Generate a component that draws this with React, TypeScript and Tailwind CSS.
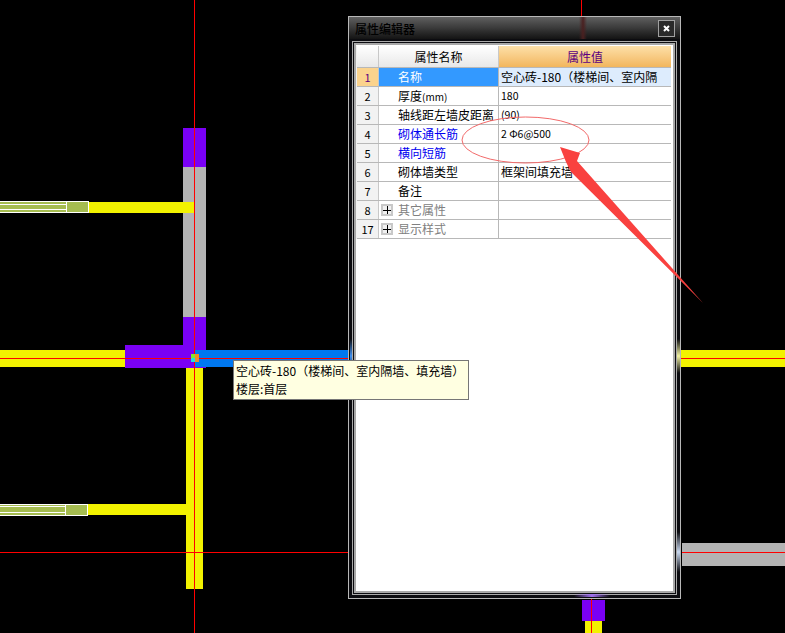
const CJK = 'font-["Noto_Sans_CJK_SC","Liberation_Sans",sans-serif]';

type Row = {
  no: string;
  name: string;
  unit?: string;
  value?: string;
  tone?: 'blue' | 'gray' | 'active';
  expand?: boolean;
  smallValue?: boolean;
};

const rows: Row[] = [
  { no: '1', name: '名称', value: '空心砖-180（楼梯间、室内隔', tone: 'active' },
  { no: '2', name: '厚度', unit: '(mm)', value: '180', smallValue: true },
  { no: '3', name: '轴线距左墙皮距离', value: '(90)', smallValue: true },
  { no: '4', name: '砌体通长筋', value: '2 Φ6@500', tone: 'blue', smallValue: true },
  { no: '5', name: '横向短筋', tone: 'blue' },
  { no: '6', name: '砌体墙类型', value: '框架间填充墙' },
  { no: '7', name: '备注' },
  { no: '8', name: '其它属性', tone: 'gray', expand: true },
  { no: '17', name: '显示样式', tone: 'gray', expand: true },
];

// CAD drawing behind the window
const Drawing = () => (
  <svg className="absolute inset-0" width={785} height={633} shapeRendering="crispEdges">
    <rect x={183} y={128} width={23} height={39} fill="#7a00f5" />
    <rect x={183} y={167} width={23} height={150} fill="#b3b3b3" />
    <rect x={183} y={317} width={23} height={51} fill="#7a00f5" />
    <rect x={125} y={345} width={81} height={23} fill="#7a00f5" />
    <rect x={195} y={350} width={153} height={17} fill="#0078f0" />
    <rect x={0} y={350} width={125} height={17} fill="#f2f200" />
    <rect x={186} y={368} width={17} height={221} fill="#f2f200" />
    <rect x={89} y={202} width={105} height={11} fill="#f2f200" />
    <rect x={88} y={504} width={98} height={11} fill="#f2f200" />

    <rect x={0} y={202} width={66} height={11} fill="#a5bc50" />
    <path d="M0 201.5H66M0 204.5H66M0 209.5H66M0 212.5H66" stroke="#fff" fill="none" />
    <rect x={66.5} y={201.5} width={22} height={11} fill="#a5bc50" stroke="#fff" />
    <rect x={0} y={505} width={65} height={10} fill="#a5bc50" />
    <path d="M0 504.5H65M0 506.5H65M0 512.5H65M0 515.5H65" stroke="#fff" fill="none" />
    <rect x={65.5} y={504.5} width={22} height={11} fill="#a5bc50" stroke="#fff" />

    <rect x={681} y={350} width={104} height={17} fill="#f2f200" />
    <rect x={682} y={543} width={103} height={23} fill="#b3b3b3" />
    <rect x={582} y={600} width={23} height={21} fill="#7a00f5" />
    <rect x={585} y={621} width={17} height={12} fill="#f2f200" />

    <path d="M194.5 0V633M0 358.5H348M681 358.5H785M0 552.5H348M682 552.5H785M591.5 599V633M581.5 0V16" stroke="#ff0000" fill="none" />

    <rect x={191} y={354} width={4} height={4} fill="#80e830" />
    <rect x={195} y={354} width={4} height={4} fill="#f09020" />
    <rect x={191} y={358} width={4} height={4} fill="#20e0e0" />
    <rect x={195} y={358} width={4} height={4} fill="#e89030" />
  </svg>
);

const PropertyTable = () => (
  <div className="mt-[1px] w-[315px] border-l border-[#f0f0f0]">
    <div className="grid h-[22px] grid-cols-[22px_120px_172px] border-b border-[#b8b8b8] text-[12px]">
      <div className="border-r border-[#c8c8c8] bg-gradient-to-b from-white to-[#e8e8e8]" />
      <div className="flex items-center justify-center border-r border-[#c8c8c8] bg-gradient-to-b from-white to-[#e8e8e8] text-black">
        属性名称
      </div>
      <div className="flex items-center justify-center bg-gradient-to-b from-[#fde0a8] to-[#f2b65c] text-[#5b0080]">
        属性值
      </div>
    </div>
    {rows.map(row => (
      <div
        key={row.no}
        className="grid h-[19px] grid-cols-[22px_120px_172px] grid-rows-[18px] border-b border-[#b8b8b8] text-[12px] leading-[18px]"
      >
        <div
          className={`border-r border-[#c8c8c8] text-center text-[11px] ${
            row.tone === 'active' ? 'bg-[#fbd38d] text-[#5b0080]' : 'bg-[#f2f2f2] text-black'
          }`}
        >
          {row.no}
        </div>
        <div
          className={`flex items-center border-r border-[#b8b8b8] ${
            row.tone === 'active'
              ? 'bg-[#3399ff] text-white'
              : row.tone === 'blue'
                ? 'text-[#0000f0]'
                : row.tone === 'gray'
                  ? 'text-[#808080]'
                  : 'text-black'
          }`}
        >
          {row.expand ? (
            <span className="ml-[2px] mr-[5px] flex h-[12px] w-[12px] items-center justify-center border-2 border-[#c8c8c8] bg-[#f0f0f0]">
              <svg width={8} height={8} shapeRendering="crispEdges">
                <path d="M0 4.5H8M4.5 0V8" stroke="#000" fill="none" />
              </svg>
            </span>
          ) : (
            <span className="w-[19px]" />
          )}
          <span className="whitespace-nowrap">
            {row.name}
            {row.unit && <span className="text-[10px] leading-none">{row.unit}</span>}
          </span>
        </div>
        <div
          className={`overflow-hidden whitespace-nowrap pl-[2px] text-black ${
            row.smallValue ? 'text-[10.5px]' : 'text-[12px]'
          } ${row.tone === 'active' ? 'bg-[#ddecfd]' : 'bg-white'}`}
        >
          {row.value}
        </div>
      </div>
    ))}
  </div>
);

const PropertyWindow = () => (
  <div className="absolute left-[348px] top-[16px] flex h-[583px] w-[333px] flex-col border border-[#b8b8b8] bg-[#0c0c10]">
    <div className="flex h-[22px] shrink-0 items-center justify-between bg-gradient-to-b from-[#606060] via-[#3a3a3a] to-[#141414] pl-[6px] pr-[5px] pt-[1px]">
      <span className="text-[12px] font-medium text-black">属性编辑器</span>
      <span className="flex h-[17px] w-[17px] items-center justify-center border border-[#a0a0a0] bg-[#2a2a2a]">
        <svg width={7} height={7}>
          <path d="M1 1L6 6M6 1L1 6" stroke="#fff" strokeWidth={2} fill="none" />
        </svg>
      </span>
    </div>
    <div className="mx-[3px] mb-[3px] mt-[2px] min-h-0 flex-1 border border-[#aaa] p-[1px]">
      <div className="h-full border-2 border-[#a8a8a8] bg-white">
        <PropertyTable />
      </div>
    </div>
    {/* glass frame picks up the colours of the walls behind it */}
    <div className="absolute left-[328px] top-[322px] h-[34px] w-[3px] bg-gradient-to-b from-transparent via-[#f0f0a0] to-transparent" />
    <div className="absolute left-[328px] top-[515px] h-[40px] w-[3px] bg-gradient-to-b from-transparent via-[#c8d8f0] to-transparent" />
    <div className="absolute left-[1px] top-[322px] h-[34px] w-[2px] bg-gradient-to-b from-transparent via-[#4090f0] to-transparent" />
    <div className="absolute left-[225px] top-[577px] h-[3px] w-[36px] bg-gradient-to-r from-transparent via-[#a070f0] to-transparent" />
    <div className="absolute left-[230px] top-0 h-[22px] w-[8px] bg-gradient-to-r from-transparent via-[#4a2020] to-transparent" />
  </div>
);

const Tooltip = () => (
  <div className="absolute left-[233px] top-[360px] h-[40px] w-[236px] border border-[#767676] bg-[#ffffe1] pl-[2px] pt-[1px] text-[12px] leading-[18px] text-black">
    <div className="whitespace-nowrap">空心砖-180（楼梯间、室内隔墙、填充墙）</div>
    <div>楼层:首层</div>
  </div>
);

// annotation drawn over the screenshot
const Annotation = () => (
  <svg className="pointer-events-none absolute inset-0" width={785} height={633}>
    <ellipse cx={525.5} cy={140} rx={63.5} ry={23} fill="none" stroke="#f26a6a" strokeWidth={1} />
    <polygon points="560,147 580,153 577,161 703,303 571,172 566,162" fill="#f9413f" />
  </svg>
);

export default function App() {
  return (
    <div className={`relative h-[633px] w-[785px] overflow-hidden bg-black ${CJK}`}>
      <Drawing />
      <PropertyWindow />
      <Tooltip />
      <Annotation />
    </div>
  );
}
